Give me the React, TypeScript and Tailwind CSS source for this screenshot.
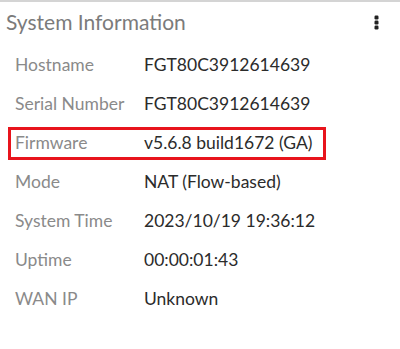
import React from "react";

const rows = [
  { label: "Hostname", value: "FGT80C3912614639" },
  { label: "Serial Number", value: "FGT80C3912614639" },
  { label: "Firmware", value: "v5.6.8 build1672 (GA)", highlight: true },
  { label: "Mode", value: "NAT (Flow-based)" },
  { label: "System Time", value: "2023/10/19 19:36:12" },
  { label: "Uptime", value: "00:00:01:43" },
  { label: "WAN IP", value: "Unknown" },
];

export default function App() {
  return (
    <div className="w-[400px] h-[349px] bg-white border-t-2 border-[#d4d4d4] font-['Lato',sans-serif] overflow-hidden">
      {/* Titre + menu */}
      <div className="h-[40px] flex items-center justify-between pl-[6px] pr-[21px]">
        <span className="text-[21px] text-[#7b7b7b]">System Information</span>
        <svg width="5" height="15" viewBox="0 0 5 15" className="mt-[1px]">
          <rect x="0.5" y="0.5" width="4" height="4" rx="1.2" fill="#222" />
          <rect x="0.5" y="5.5" width="4" height="4" rx="1.2" fill="#222" />
          <rect x="0.5" y="10.5" width="4" height="4" rx="1.2" fill="#222" />
        </svg>
      </div>

      <div className="pl-2 pt-[4px]">
        {rows.map((r) => (
          <div key={r.label} className="h-[39px] flex items-center">
            <div
              className={`h-[33px] w-[318px] flex items-center border-[3px] pl-1 text-[17.5px] ${
                r.highlight ? "border-[#e8141c]" : "border-transparent"
              }`}
            >
              <span className="w-[129px] text-[#8a8a8a]">{r.label}</span>
              <span className="text-[#2b2b2b]">{r.value}</span>
            </div>
          </div>
        ))}
      </div>
    </div>
  );
}
